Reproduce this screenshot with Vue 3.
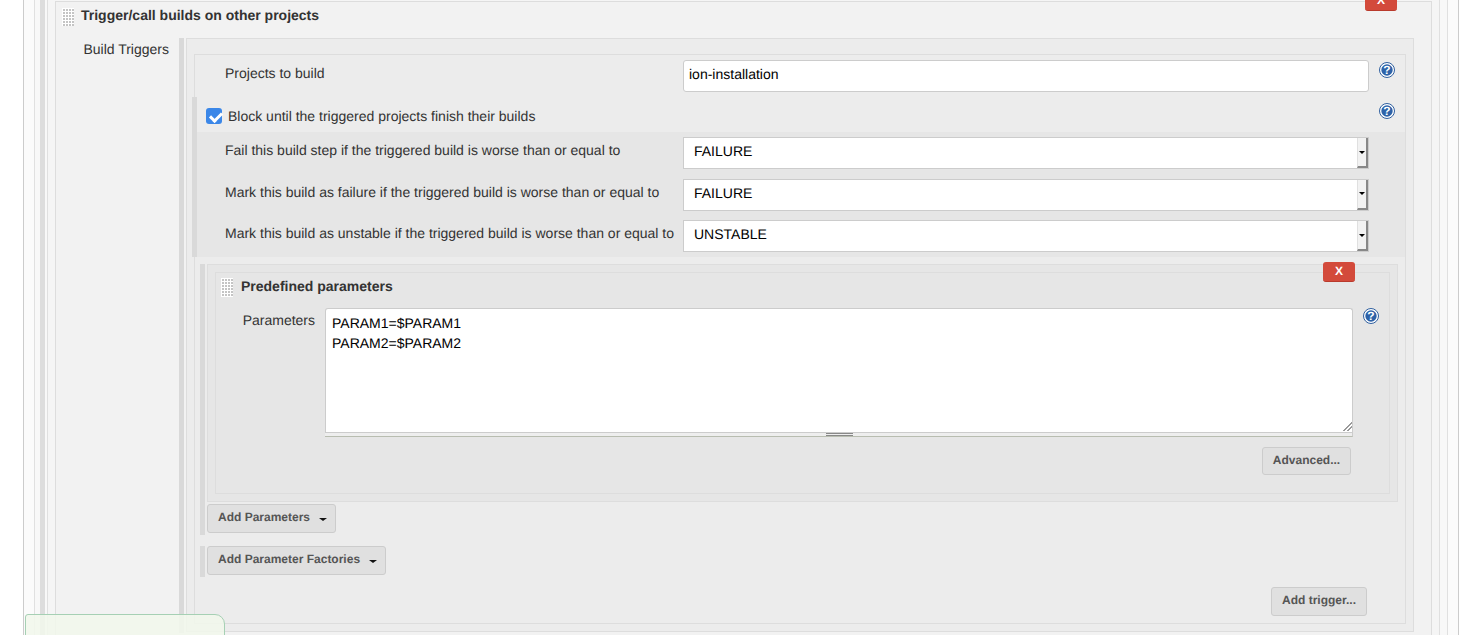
<script setup>
const selects = [
  { label: 'Fail this build step if the triggered build is worse than or equal to', value: 'FAILURE' },
  { label: 'Mark this build as failure if the triggered build is worse than or equal to', value: 'FAILURE' },
  { label: 'Mark this build as unstable if the triggered build is worse than or equal to', value: 'UNSTABLE' }
]
const options = ['SUCCESS', 'UNSTABLE', 'FAILURE']
const params = 'PARAM1=$PARAM1\nPARAM2=$PARAM2'
</script>

<template>
  <div class="page">
    <div class="frame-a">
      <div class="frame-b">
        <div class="frame-c">
          <div class="frame-d">
            <section class="frame-e">
              <button class="del" type="button">X</button>
              <header class="head head-top">
                <span class="grip"></span>
                <h3 class="title">Trigger/call builds on other projects</h3>
              </header>
              <div class="form">
                <div class="form-label">Build Triggers</div>
                <div class="bar-wrap">
                  <div class="frame-f">
                    <div class="frame-g">
                      <div class="row row-projects">
                        <label class="row-label">Projects to build</label>
                        <input class="text" value="ion-installation" />
                        <svg class="help" viewBox="0 0 16 16"><circle cx="8" cy="8" r="7.5" fill="#fff" stroke="#2f5f9f"/><circle cx="8" cy="8" r="5.7" fill="#2d62a8"/><text x="8" y="12.2" text-anchor="middle" class="q">?</text></svg>
                      </div>

                      <div class="block">
                        <div class="check-row">
                          <input class="check" type="checkbox" checked />
                          <span class="check-label">Block until the triggered projects finish their builds</span>
                          <svg class="help help-check" viewBox="0 0 16 16"><circle cx="8" cy="8" r="7.5" fill="#fff" stroke="#2f5f9f"/><circle cx="8" cy="8" r="5.7" fill="#2d62a8"/><text x="8" y="12.2" text-anchor="middle" class="q">?</text></svg>
                        </div>
                        <div class="select-rows">
                          <div v-for="s in selects" :key="s.label" class="row select-row">
                            <label class="row-label row-label-sel">{{ s.label }}</label>
                            <div class="select-box">
                              <select class="select" :value="s.value">
                                <option v-for="o in options" :key="o">{{ o }}</option>
                              </select>
                              <span class="select-btn"><i class="mini-caret"></i></span>
                            </div>
                          </div>
                        </div>
                      </div>

                      <div class="bar-item bar-params">
                        <div class="frame-h">
                          <div class="frame-i">
                            <button class="del" type="button">X</button>
                            <header class="head head-inner">
                              <span class="grip"></span>
                              <h3 class="title">Predefined parameters</h3>
                            </header>
                            <div class="param-row">
                              <label class="param-label">Parameters</label>
                              <div class="area-wrap">
                                <textarea class="area" :value="params"></textarea>
                                <span class="resize"></span>
                                <div class="grippie"><span></span></div>
                              </div>
                              <svg class="help help-param" viewBox="0 0 16 16"><circle cx="8" cy="8" r="7.5" fill="#fff" stroke="#2f5f9f"/><circle cx="8" cy="8" r="5.7" fill="#2d62a8"/><text x="8" y="12.2" text-anchor="middle" class="q">?</text></svg>
                            </div>
                            <div class="adv-row"><button class="btn" type="button">Advanced...</button></div>
                          </div>
                        </div>
                        <button class="btn btn-add" type="button">Add Parameters<i class="caret"></i></button>
                      </div>

                      <div class="bar-item bar-factories">
                        <button class="btn btn-add" type="button">Add Parameter Factories<i class="caret"></i></button>
                      </div>

                      <div class="trigger-row"><button class="btn" type="button">Add trigger...</button></div>
                    </div>
                  </div>
                </div>
              </div>
            </section>
          </div>
        </div>
      </div>
    </div>
    <div class="toast"></div>
  </div>
</template>

<style>
html, body { margin: 0; background: #fff; overflow: hidden; }
</style>

<style scoped>
* { box-sizing: border-box; text-rendering: geometricPrecision; }
.page {
  position: relative;
  width: 1475px;
  height: 635px;
  overflow: hidden;
  padding: 0 16px 0 23px;
  font: 14px/20px "Liberation Sans", Arial, sans-serif;
  color: #333;
}
.frame-a {
  height: 660px;
  border: solid #ccc;
  border-width: 0 1px;
  background: #fbfbfb;
  padding: 0 10px;
}
.frame-b {
  height: 100%;
  border: solid #e0e0e0;
  border-width: 0 1px;
  background: #f8f8f8;
  padding: 0 0 0 5px;
}
.frame-c {
  height: 100%;
  border-left: 5px solid #ddd;
  padding: 0 7px 0 2px;
}
.frame-d {
  height: 100%;
  border: solid #e0e0e0;
  border-width: 0 1px;
  background: #f5f5f5;
  padding: 1px 7px 0;
}
.frame-e {
  position: relative;
  height: 100%;
  border: solid #ddd;
  border-width: 1px 1px 0;
  background: #f2f2f2;
}
.head { display: flex; align-items: flex-start; }
.head-top { height: 36px; padding: 6px 0 0 6px; }
.head-inner { height: 35px; padding: 5px 0 0 5px; }
.grip {
  flex: none;
  width: 12px;
  height: 18px;
  margin-right: 7px;
  background-color: #c4c4c4;
  background-image:
    linear-gradient(90deg, #fff 1px, transparent 1px),
    linear-gradient(#fff 1px, transparent 1px);
  background-size: 3px 3px;
}
.head-inner .grip { height: 19px; margin-right: 8px; }
.title {
  margin: -2px 0 0;
  font-size: 14px;
  font-weight: bold;
  line-height: 18px;
  color: #333;
}
.head-inner .title { margin-top: -1px; }
.del {
  position: absolute;
  right: 34px;
  top: -11px;
  z-index: 2;
  width: 32px;
  height: 20px;
  padding: 0;
  border: 0;
  border-bottom: 1px solid #b93a2c;
  border-radius: 3px;
  background: #d34a3b;
  color: #fff;
  font: bold 12px/17px "Liberation Sans", Arial, sans-serif;
}
.form { display: flex; }
.form-label {
  width: 123px;
  flex: none;
  padding: 1px 10px 0 0;
  text-align: right;
  line-height: 20px;
}
.bar-wrap {
  flex: 1;
  border-left: 5px solid #d9d9d9;
  padding: 0 17px 1px 2px;
}
.frame-f {
  border: 1px solid #ddd;
  background: #ececec;
  padding: 15px 7px 7px;
}
.frame-g {
  border: 1px solid #ddd;
  padding-top: 5px;
  padding-bottom: 7px;
}
.row { display: grid; align-items: start; }
.row-projects { grid-template-columns: 488px 686px 1fr; height: 32px; }
.row-label { padding: 3px 0 0 30px; color: #333; white-space: nowrap; }
.row-label-sel { padding: 3px 0 0 28px; }
.text {
  width: 686px;
  height: 32px;
  border: 1px solid #ccc;
  border-radius: 3px;
  background: #fff;
  padding: 0 5px 4px;
  font: 14px "Liberation Sans", Arial, sans-serif;
  color: #000;
  outline: 0;
}
.help { width: 16px; height: 16px; display: block; margin: 2px 0 0 10px; }
.q { font: bold 12px "Liberation Sans", Arial, sans-serif; fill: #fff; }
.block {
  margin: 5px 0 0 -3px;
  border-left: 5px solid #d9d9d9;
}
.check-row {
  position: relative;
  display: flex;
  align-items: center;
  height: 35px;
  padding: 3px 0 0 9px;
}
.check {
  appearance: none;
  position: relative;
  width: 16px;
  height: 16px;
  margin: -1px 6px 0 0;
  border-radius: 3px;
  background: #3b87e8;
}
.check::after {
  content: "";
  position: absolute;
  left: 5.5px;
  top: 2.5px;
  width: 5px;
  height: 9px;
  border: solid #fff;
  border-width: 0 3px 3px 0;
  transform: rotate(45deg);
}
.help-check { position: absolute; left: 1182px; top: 6px; margin: 0; }
.select-rows {
  display: flex;
  flex-direction: column;
  gap: 9.5px;
  padding: 5px 0;
  background: #e6e6e6;
}
.select-row { grid-template-columns: 486px 686px; height: 32px; }
.select-box { position: relative; width: 686px; height: 32px; }
.select {
  appearance: none;
  display: block;
  width: 100%;
  height: 100%;
  border: 1px solid #ccc;
  border-radius: 0;
  background: #fff;
  padding: 0 10px 4px;
  font: 14px "Liberation Sans", Arial, sans-serif;
  color: #000;
  outline: 0;
}
.select-btn {
  position: absolute;
  right: 1px;
  top: 1px;
  bottom: 1px;
  width: 11px;
  background: #f2f2f2;
  border-left: 1px solid #e0e0e0;
  border-right: 2px solid #888;
  border-bottom: 2px solid #888;
  display: flex;
  align-items: center;
  justify-content: center;
}
.mini-caret {
  border: solid transparent;
  border-width: 3px 3px 0;
  border-top-color: #000;
}
.bar-item {
  margin-left: 5px;
  border-left: 5px solid #d9d9d9;
  padding-left: 2px;
}
.bar-params { margin-top: 7px; padding-bottom: 2px; }
.frame-h {
  width: 1191px;
  border: 1px solid #ddd;
  background: #e6e6e6;
  padding: 7px;
  margin-bottom: 2px;
}
.frame-i {
  position: relative;
  border: 1px solid #ddd;
  padding-bottom: 18px;
}
.param-row { display: flex; align-items: flex-start; }
.param-label {
  width: 109px;
  flex: none;
  padding: 2px 10px 0 0;
  text-align: right;
  color: #333;
}
.area-wrap { position: relative; width: 1028px; flex: none; }
.area {
  display: block;
  width: 100%;
  height: 124px;
  border: 1px solid #ccc;
  border-bottom: 0;
  border-radius: 3px 3px 0 0;
  background: #fff;
  padding: 4px 6px;
  font: 14px/20px "Liberation Sans", Arial, sans-serif;
  color: #000;
  outline: 0;
  resize: none;
  overflow: hidden;
}
.resize {
  position: absolute;
  right: 1px;
  top: 112px;
  width: 11px;
  height: 11px;
  background: repeating-linear-gradient(135deg, #999 0 1px, #fff 1px 3px);
  clip-path: polygon(100% 0, 100% 100%, 0 100%);
}
.grippie {
  height: 5px;
  background: #eee;
  border: solid #ccc;
  border-width: 1px 1px 1px 0;
  border-bottom-color: #b8bdb0;
  display: flex;
  justify-content: center;
  padding-left: 2px;
}
.grippie span {
  width: 27px;
  height: 3px;
  border-top: 1px solid #888;
  border-bottom: 1px solid #888;
}
.help-param { margin: 0 0 0 10px; }
.adv-row { display: flex; justify-content: flex-end; padding: 10px 38px 0 0; }
.btn {
  height: 29px;
  padding: 0 10px 3px;
  border: 1px solid #ccc;
  border-radius: 3px;
  background: #e0e0e0;
  color: #555;
  font: bold 12px "Liberation Sans", Arial, sans-serif;
  white-space: nowrap;
}
.adv-row .btn { width: 89px; height: 28px; padding: 0 0 3px; }
.btn-add { display: block; padding: 0 8px 3px 10px; }
.caret {
  display: inline-block;
  margin-left: 9px;
  vertical-align: 0;
  border: solid transparent;
  border-width: 3px 4px 0;
  border-top-color: #111;
}
.bar-factories { margin-top: 11px; padding-bottom: 2px; }
.trigger-row { display: flex; justify-content: flex-end; padding: 10px 38px 0 0; }
.trigger-row .btn { width: 96px; padding: 0 0 3px; }
.toast {
  position: absolute;
  left: 25px;
  top: 614px;
  width: 200px;
  height: 40px;
  border: 1px solid #a6d0b4;
  border-radius: 3px 10px 0 0;
  background: rgba(241, 247, 236, 0.88);
}
</style>
